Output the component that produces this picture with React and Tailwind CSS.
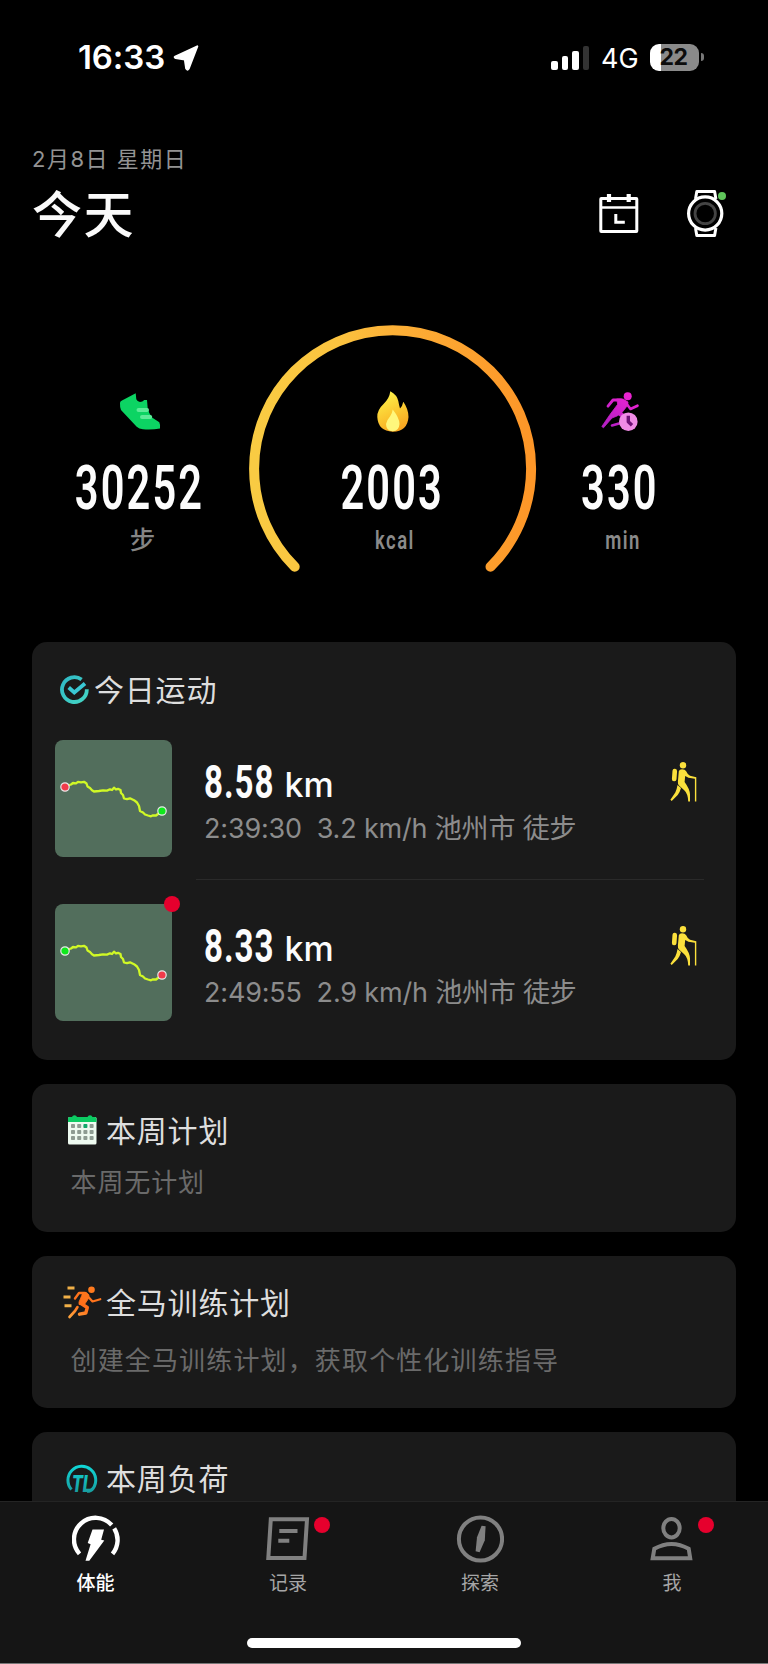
import React from 'react';

const PAGE = "font-[Inter,'Noto_Sans_CJK_SC',sans-serif] h-[1664px] w-[768px] overflow-hidden bg-black text-white";

function StatusBar() {
  return (
    <div className="flex h-[115px] items-start pt-[43px]">
      <div className="ml-[78px] h-7 w-[93px] text-[33px] leading-7 font-semibold tracking-[-0.1px] whitespace-nowrap">16:33</div>
      <svg className="mt-px ml-[2px]" width="27" height="28" viewBox="0 0 27 28">
        <path d="M2.2 12.6 24.3 2.4 15.6 24.8Q14.4 26.6 13.2 24.6L11.8 15.4 2.6 14Q1 13.3 2.2 12.6Z" fill="#fff" stroke="#fff" strokeWidth="2" strokeLinejoin="round" />
      </svg>
      <div className="mt-[2px] ml-[351px] flex h-[25px] items-end gap-[4px]">
        <i className="h-[9px] w-[6.5px] rounded-[2px] bg-white" />
        <i className="h-[14px] w-[6.5px] rounded-[2px] bg-white" />
        <i className="h-[19px] w-[6.5px] rounded-[2px] bg-white" />
        <i className="h-[24px] w-[6.5px] rounded-[2px] bg-[#333]" />
      </div>
      <div className="ml-[12px] w-[49px] pt-px text-[27px] leading-[29px] whitespace-nowrap">4G</div>
      <div className="mt-[0.5px] flex h-[27px] w-[49px] items-center justify-center rounded-[9px] bg-[linear-gradient(90deg,#fff_23%,#8a8a8a_23%)] pr-[2px] text-[23px] leading-[27px] font-bold tracking-[-0.4px] text-[#0c0c0c]">22</div>
      <i className="mt-[10px] ml-[2px] h-[8px] w-[2.5px] rounded-r-full bg-[#777]" />
    </div>
  );
}

function Header() {
  return (
    <header className="flex h-[131px] px-8">
      <div className="w-[567px] pt-[28px]">
        <div className="h-[32px] text-[22px] leading-[32px] tracking-[1.5px] text-[#939393]">2月8日 星期日</div>
        <h1 className="mt-[10px] h-[60px] text-[50px] leading-[60px] font-medium tracking-[1.4px] text-[#fafafa]">今天</h1>
      </div>
      <svg className="mt-[78px]" width="40" height="41" viewBox="0 0 40 41" fill="none" stroke="#fff">
        <rect x="1.8" y="5.5" width="36" height="33" rx="0.5" strokeWidth="3" />
        <path d="M2 14.5H38" strokeWidth="2.6" />
        <path d="M10 1V9M29.7 1V9" strokeWidth="4.2" />
        <path d="M16.8 21V29.3H25.8" strokeWidth="3" />
      </svg>
      <svg className="mt-[74px] ml-[46px]" width="44" height="50" viewBox="0 0 44 50" fill="none">
        <path d="M10.500 10 11.800 2.500H29.600L30.900 10M10.500 39 11.800 46.500H29.600L30.900 39" stroke="#fff" strokeWidth="3" strokeLinejoin="round" />
        <circle cx="20.2" cy="24.5" r="16.6" stroke="#fff" strokeWidth="3.2" fill="#000" />
        <circle cx="20.2" cy="24.5" r="10.2" stroke="#444" strokeWidth="2.8" />
        <circle cx="37" cy="7" r="4" fill="#5fc55a" />
      </svg>
    </header>
  );
}

const Big = ({ children }) => (
  <div className="flex h-[60px] items-center justify-center">
    <span className="inline-block scale-x-[0.67] font-[Roboto,sans-serif] text-[62px] leading-[60px] font-semibold tracking-[3.2px] text-[#fcfcfc]">{children}</span>
  </div>
);

const Unit = ({ children }) => (
  <span className="inline-block scale-x-[0.74] font-[Roboto,sans-serif] text-[25px] leading-[30px] font-semibold tracking-[2px]">{children}</span>
);

function Stats() {
  return (
    <section className="relative flex h-[396px] justify-between">
      <svg className="absolute top-[75px] left-[245px]" width="296" height="260" viewBox="0 0 296 260">
        <defs>
          <linearGradient id="ring" x1="0" x2="1" y1="0" y2="0">
            <stop offset="0" stopColor="#f9cb43" />
            <stop offset="0.3" stopColor="#fbc33f" />
            <stop offset="0.5" stopColor="#fcb037" />
            <stop offset="1" stopColor="#fd9628" />
          </linearGradient>
        </defs>
        <path d="M49.7 245.8A138.5 138.5 0 1 1 245.5 245.8" fill="none" stroke="url(#ring)" strokeWidth="10" strokeLinecap="round" />
      </svg>
      <div className="ml-[41px] flex w-[198px] flex-col items-center pt-[145px]">
        <svg width="42" height="42" viewBox="0 -2 42 42">
          <path d="M1 10Q1 8.5 3 7.6L16.7 .3 17.3 6.3Q18.5 9 21 9 23.5 9 25.3 7H28L28.7 15.3Q30 21 33 24.5L40.3 29.3Q41.5 32 41 35.5 33 37 24 36.3 20 36 17.7 33.7L2 17Q.8 14 1 10Z" fill="#0cd463" />
          <path d="M19.5 17H28M23 24H31.2" stroke="#5ceb98" strokeWidth="4" strokeLinecap="round" />
        </svg>
        <div className="mt-[25px]"><Big>30252</Big></div>
        <div className="mt-[3.5px] pl-[5px] text-[25.500px] leading-[36px] font-medium text-[#858585]">步</div>
      </div>
      <div className="ml-[26px] flex w-[200px] flex-col items-center pt-[143px]">
        <svg width="32" height="44" viewBox="0 -2 32 44">
          <defs>
            <linearGradient id="flame" x1="0.3" y1="0" x2="0.7" y2="1">
              <stop offset="0" stopColor="#fdf34a" />
              <stop offset="0.5" stopColor="#fbcb32" />
              <stop offset="1" stopColor="#f8a21f" />
            </linearGradient>
          </defs>
          <path d="M13.3 .3Q20 4 21.3 10 22 14 23 17.5 25.5 15 26.3 10.7 31.5 18 31.5 26 30.5 40.5 15.8 40.7 1 40 .3 26 0 19 7 12.5 12.5 7 13.3 .3Z" fill="url(#flame)" />
          <path d="M15.7 18.5Q22.5 27 22.5 33 22 40.3 15.7 40.3 9.2 40.3 9 33 9.500 29.500 13 25.500 15.200 22.500 15.700 18.500Z" fill="#fff77c" />
        </svg>
        <div className="mt-[25px]"><Big>2003</Big></div>
        <div className="mt-[8px] pl-[5px] text-[#8a8a8a]"><Unit>kcal</Unit></div>
      </div>
      <div className="mr-[48px] flex w-[200px] flex-col items-center pt-[143px]">
        <svg width="38" height="44" viewBox="0 -3 38 44" fill="none" strokeLinecap="round" strokeLinejoin="round">
          <defs>
            <linearGradient id="run" gradientUnits="userSpaceOnUse" x1="30" y1="0" x2="6" y2="36">
              <stop offset="0" stopColor="#f024d2" />
              <stop offset="1" stopColor="#b31fc4" />
            </linearGradient>
          </defs>
          <circle cx="26.7" cy="4.3" r="4" fill="url(#run)" />
          <path d="M7 14.200 12 8H20" stroke="url(#run)" strokeWidth="2.800" />
          <path d="M16 7 22 7 27 10 26.500 13.500 21 20.500 16 24 11 26 2.500 35.800 .8 34.500 9 22.500 16.500 12.500Z" fill="url(#run)" stroke="url(#run)" strokeWidth="0.800" />
          <path d="M25 11 29.500 17 36.500 13.700M11 33.500 18 31.500" stroke="url(#run)" strokeWidth="2.600" />
          <path d="M17 20 22 24" stroke="url(#run)" strokeWidth="4.500" />
          <circle cx="27.300" cy="29.700" r="9.300" fill="#f08be6" />
          <path d="M27.300 23.800V29.800L31 33.300" stroke="#6e1076" strokeWidth="3.400" strokeLinecap="butt" />
        </svg>
        <div className="mt-[25px]"><Big>330</Big></div>
        <div className="mt-[8px] pl-[7px] text-[#8a8a8a]"><Unit>min</Unit></div>
      </div>
    </section>
  );
}

const ROUTE = 'M10 47 13 45.500 16 44.500 18 43 21 43.300 23 41.800 26 42.300 29 41.800 31.500 43.500 32.500 46.500 35 48 37 50.200 39 51.500 44 51 48 50.300 52 50.600 55 49.300 57 50 59 47.700 61 49.500 63 48.800 65.500 50 66 53 68 55 69 58.500 72 59.200 75 58.300 79 60.200 82 62.500 84 66 85 71 88 72.500 90 74.500 93 75.500 96 76.300 98 75.300 101 75.500 107 71';

function Activity({ km, info, start, end, dot }) {
  return (
    <div className="flex h-[117px]">
      <div className="relative h-[117px] w-[117px] rounded-[8px] bg-[#526e5c]">
        <svg width="117" height="117" viewBox="0 0 117 117">
          <path d={ROUTE} fill="none" stroke="#d0f826" strokeWidth="2.300" strokeLinejoin="round" />
          <circle cx="10" cy="47" r="4.200" fill={start} stroke="#e8e8e8" strokeWidth="1.200" />
          <circle cx="107" cy="71" r="4.200" fill={end} stroke="#e8e8e8" strokeWidth="1.200" />
        </svg>
        {dot && <i className="absolute -top-2 -right-2 h-4 w-4 rounded-full bg-[#e6002d]" />}
      </div>
      <div className="ml-[32px] flex-1 pt-[18px]">
        <div className="flex h-[48px] items-baseline text-[#fcfcfc]">
          <span className="inline-block w-[80.5px] origin-left scale-x-[0.72] font-[Roboto,sans-serif] text-[46px] leading-[48px] font-bold tracking-[1.300px]">{km}</span>
          <span className="relative -top-px text-[34px] leading-[48px] font-medium">km</span>
        </div>
        <div className="mt-[5px] h-[36px] text-[27px] leading-[36px] tracking-[-0.180px] whitespace-pre text-[#8c8c8c]">{info}</div>
      </div>
      <svg className="mt-[20.500px] mr-[38.500px]" width="28" height="42" viewBox="0 -0.500 28 42" fill="#fbe03c">
        <circle cx="13" cy="3.700" r="3.200" />
        <rect x="2.200" y="7.300" width="4.600" height="12.500" rx="2.200" transform="rotate(4 4.500 13.500)" />
        <path d="M8.800 9.800Q9.500 7.800 12 7.800 15 7.800 16 9.500 17.500 13 20 14.200L26.300 15.800V40H24.900V17.300L18.500 16.200 15.200 14.500 14.600 20.500Q19.800 27.500 20 33V40H18.200Q18 32 14 28.500L9 24Q7.600 22.500 7.900 20Z" />
        <path d="M7.500 23.500 11 26.500Q9.800 31 7.700 33.500L1.700 39.500 .4 38.300 5.300 31Q6.800 28 7.500 23.500Z" />
      </svg>
    </div>
  );
}

const Title = ({ children }) => (
  <h2 className="text-[30px] leading-[40px] tracking-[0.800px] text-[#dedede]">{children}</h2>
);

function Cards() {
  return (
    <main className="flex h-[859px] flex-col gap-[24px] overflow-hidden px-8">
      <section className="h-[417.500px] shrink-0 rounded-[15px] bg-[#1a1a1a] pl-[23px]">
        <div className="flex h-[98px] items-center pb-[3px] pl-[5px]">
          <svg width="30" height="30" viewBox="0 0 30 30" fill="none" strokeWidth="3.800">
            <defs>
              <linearGradient id="chk" x1="0" y1="0" x2="1" y2="1">
                <stop offset="0" stopColor="#2fb9c6" />
                <stop offset="1" stopColor="#45d6c4" />
              </linearGradient>
            </defs>
            <path d="M21.600 4.500A12.400 12.400 0 1 0 26.800 14.300" stroke="url(#chk)" />
            <path d="M8.700 12.500 14.300 17.500 25 8.500" stroke="#3ac8d4" />
          </svg>
          <div className="ml-[4px]"><Title>今日运动</Title></div>
        </div>
        <Activity km="8.58" info="2:39:30  3.2 km/h 池州市 徒步" start="#f23b4b" end="#0fe81c" />
        <div className="mt-[22px] mr-[32px] mb-[24px] ml-[141px] h-px bg-[#2a2a2a]" />
        <Activity km="8.33" info="2:49:55  2.9 km/h 池州市 徒步" start="#0fe81c" end="#f23b4b" dot />
      </section>

      <section className="h-[148px] shrink-0 rounded-[15px] bg-[#1a1a1a] pt-[27px]">
        <div className="flex h-[40px] items-center pl-[36px]">
          <svg width="29" height="31" viewBox="0 0 29 31">
            <rect x="0" y="2" width="28.500" height="27.500" rx="1.500" fill="#eefaf0" />
            <path d="M0 7V3.500Q0 2 1.500 2H4Q4.500 .3 6.500 .3T9 2H19.500Q20 .3 22 .3T24.500 2H27Q28.500 2 28.500 3.500V7Z" fill="#0ccb62" />
            <g fill="#8e9c92">
              {[11, 17, 23].map((y) => [5, 11.200, 17.400, 23.600].map((x) => (
                <rect key={`${x}-${y}`} x={x - 2} y={y - 2} width="4" height="4" rx="0.800" fill={x === 17.4 && y === 11 ? '#12a86a' : undefined} />
              )))}
            </g>
          </svg>
          <div className="ml-[9px]"><Title>本周计划</Title></div>
        </div>
        <p className="mt-[14px] pl-[38.500px] text-[26px] leading-[36px] tracking-[0.900px] text-[#6a6a6a]">本周无计划</p>
      </section>

      <section className="h-[152px] shrink-0 rounded-[15px] bg-[#1a1a1a] pt-[27px]">
        <div className="flex h-[40px] items-center pl-[31px]">
          <svg width="40" height="34" viewBox="0 0 40 34" fill="none" strokeLinecap="round" strokeLinejoin="round">
            <defs>
              <linearGradient id="mar" gradientUnits="userSpaceOnUse" x1="28" y1="0" x2="12" y2="33">
                <stop offset="0" stopColor="#ff7a1e" />
                <stop offset="0.600" stopColor="#ff6f1a" />
                <stop offset="1" stopColor="#ffa23c" />
              </linearGradient>
            </defs>
            <path d="M4.500 2H11.500M.5 11H7.500M1.500 19.700H8.500" stroke="#f0b048" strokeWidth="3" strokeLinecap="butt" />
            <circle cx="28.500" cy="3.800" r="3.300" fill="#ff7a1e" />
            <path d="M12 12.500 16 7H22" stroke="url(#mar)" strokeWidth="2.400" />
            <path d="M19 6.500 23.500 6.500 26 9 25.500 12.500 21.500 18.500 16 18.500 16 16 19 9Z" fill="url(#mar)" stroke="url(#mar)" strokeWidth="0.800" />
            <path d="M18 17.500 24.300 21.500 22.800 27 16.500 28.200" stroke="url(#mar)" strokeWidth="3.400" />
            <path d="M25 10.500 29.500 15.500 37.300 13.200" stroke="url(#mar)" strokeWidth="2.200" />
            <path d="M14.500 21 12 25 6.500 31" stroke="url(#mar)" strokeWidth="2.600" />
          </svg>
          <div className="ml-[3px]"><Title>全马训练计划</Title></div>
        </div>
        <p className="mt-[20px] pl-[38.500px] text-[26px] leading-[36px] tracking-[1.150px] text-[#6a6a6a]">创建全马训练计划，获取个性化训练指导</p>
      </section>

      <section className="h-[152px] shrink-0 rounded-[15px] bg-[#1a1a1a] pt-[27px]">
        <div className="flex h-[40px] items-center pl-[34px]">
          <svg className="overflow-visible" width="33" height="32" viewBox="0 0 33 32">
            <defs>
              <linearGradient id="tl" gradientUnits="userSpaceOnUse" x1="0" y1="2" x2="0" y2="30">
                <stop offset="0" stopColor="#10d8d8" />
                <stop offset="1" stopColor="#189c9e" />
              </linearGradient>
            </defs>
            <path d="M5.500 26.500A13.900 13.900 0 1 1 27 25.500Q25 28.300 21 28.300" fill="none" stroke="url(#tl)" strokeWidth="3" />
            <text x="6" y="28.800" fill="url(#tl)" className="font-[Roboto,sans-serif] text-[23px] font-black italic" textLength="20" lengthAdjust="spacingAndGlyphs">TL</text>
          </svg>
          <div className="ml-[7px]"><Title>本周负荷</Title></div>
        </div>
      </section>
    </main>
  );
}

function Tab({ label, active, dot, children }) {
  return (
    <div className="flex w-[192px] flex-col items-center pt-[12.500px]">
      <div className="relative h-[48px]">
        <svg width="48" height="48" viewBox="0 0 48 48" fill="none" stroke="#808080" strokeWidth="4">{children}</svg>
        {dot && <i className="absolute top-[2.5px] -right-[18px] h-4 w-4 rounded-full bg-[#e6002d]" />}
      </div>
      <span className={active ? 'mt-[7px] pr-px text-[19px] leading-[28px] font-medium text-white' : 'mt-[7px] text-[19px] leading-[28px] text-[#a6a6a6]'}>{label}</span>
    </div>
  );
}

function TabBar() {
  return (
    <footer className="flex h-[163px] flex-col border-t border-b border-t-[#242424] border-b-[#777] bg-[#151515]">
      <div className="flex h-[136px]">
        <Tab label="体能" active>
          <path d="M7.500 38.900A21.600 21.600 0 0 1 39.700 10M42.200 13.400A21.600 21.600 0 0 1 40.500 38.900" stroke="#fff" strokeWidth="4.400" />
          <path d="M20.500 14.500H32L29.200 24.800 32.300 25.500 17.300 45.800H13.500L18.600 29.300 15.700 28.100Z" fill="#fff" stroke="none" />
        </Tab>
        <Tab label="记录" dot>
          <path d="M6.800 4.300H43L40.500 43H4.300Z" />
          <path d="M15.300 16H33.500M14.300 25.700H25.300" />
        </Tab>
        <Tab label="探索">
          <circle cx="24.500" cy="24" r="21.600" />
          <path d="M25.600 10.700 29.600 11.300 28.800 25.200 23.600 37.200 19.600 36.200 21 22.200Z" fill="#808080" stroke="none" />
        </Tab>
        <Tab label="我" dot>
          <ellipse cx="23.500" cy="13.200" rx="8.200" ry="9.200" />
          <path d="M6.300 33.800Q23.500 24 40.700 33.800L42.200 43.300H4.700Z" />
        </Tab>
      </div>
      <div className="mx-auto h-[10px] w-[274px] rounded-full bg-white" />
    </footer>
  );
}

export default function App() {
  return (
    <div className={PAGE} lang="zh-CN">
      <StatusBar />
      <Header />
      <Stats />
      <Cards />
      <TabBar />
    </div>
  );
}
